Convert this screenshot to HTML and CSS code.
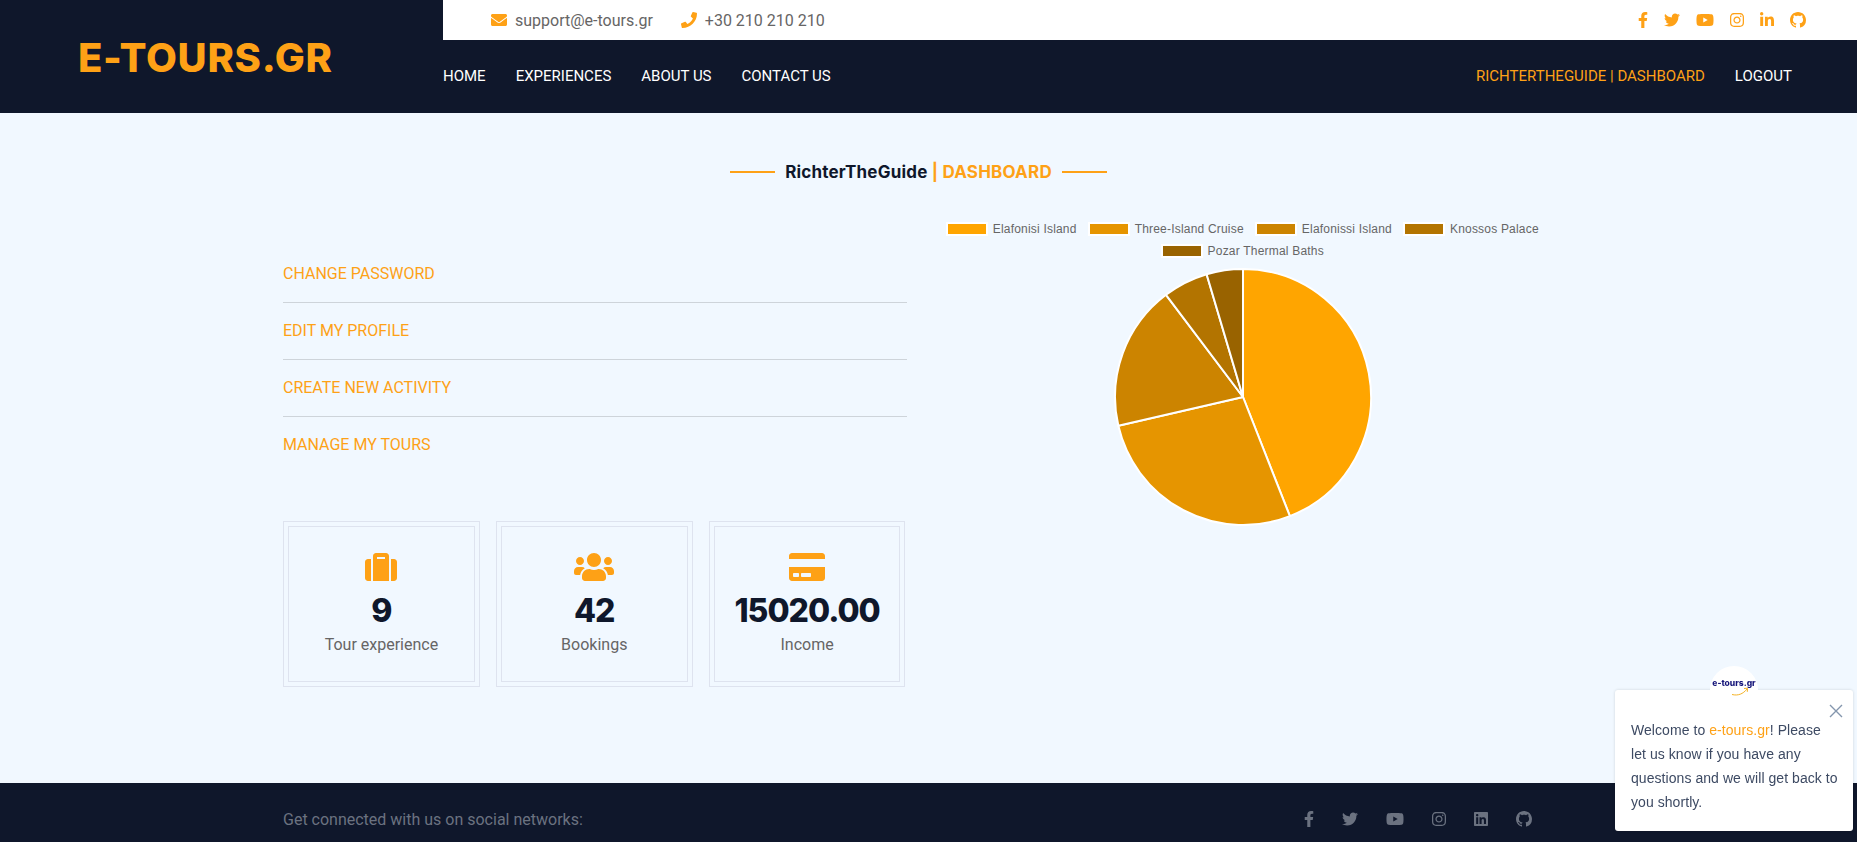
FILE: index.html
```html
<!DOCTYPE html>
<html lang="en">

<head>
    <meta charset="UTF-8">
    <meta name="viewport" content="width=device-width, initial-scale=1.0">
    <title>E-Tours.gr | Dashboard</title>
    <link rel="stylesheet" href="styles.css">
</head>

<body>
    <svg class="sprite" aria-hidden="true">
        <defs>
            <path id="i-envelope" d="M502.3 190.8c3.9-3.1 9.7-.2 9.7 4.7V400c0 26.5-21.5 48-48 48H48c-26.5 0-48-21.5-48-48V195.6c0-5 5.7-7.8 9.7-4.7 22.4 17.4 52.1 39.5 154.1 113.6 21.1 15.4 56.7 47.8 92.2 47.6 35.7.3 72-32.8 92.3-47.6 102-74.1 131.6-96.3 154-113.7zM256 320c23.2.4 56.6-29.2 73.4-41.4 132.7-96.3 142.8-104.7 173.4-128.7 5.8-4.5 9.2-11.5 9.2-18.9v-19c0-26.5-21.5-48-48-48H48C21.5 64 0 85.5 0 112v19c0 7.4 3.4 14.3 9.2 18.9 30.6 23.9 40.7 32.4 173.4 128.7 16.8 12.2 50.2 41.8 73.4 41.4z"/>
            <path id="i-phone" d="M493.4 24.6l-104-24c-11.3-2.6-22.9 3.3-27.5 13.9l-48 112c-4.2 9.8-1.4 21.3 6.9 28l60.6 49.6c-36 76.7-98.9 140.5-177.2 177.2l-49.6-60.6c-6.8-8.3-18.2-11.1-28-6.9l-112 48C3.9 366.5-2 378.1.6 389.4l24 104C27.1 504.2 36.7 512 48 512c256.1 0 464-207.5 464-464 0-11.2-7.7-20.9-18.6-23.4z"/>
            <path id="i-facebook" d="M279.14 288l14.22-92.66h-88.91v-60.13c0-25.35 12.42-50.06 52.24-50.06h40.42V6.26S260.43 0 225.36 0c-73.22 0-121.08 44.38-121.08 124.72v70.62H22.89V288h81.39v224h100.17V288z"/>
            <path id="i-twitter" d="M459.37 151.716c.325 4.548.325 9.097.325 13.645 0 138.72-105.583 298.558-298.558 298.558-59.452 0-114.68-17.219-161.137-47.106 8.447.974 16.568 1.299 25.34 1.299 49.055 0 94.213-16.568 130.274-44.832-46.132-.975-84.792-31.188-98.112-72.772 6.498.974 12.995 1.624 19.818 1.624 9.421 0 18.843-1.3 27.614-3.573-48.081-9.747-84.143-51.98-84.143-102.985v-1.299c13.969 7.797 30.214 12.67 47.431 13.319-28.264-18.843-46.781-51.005-46.781-87.391 0-19.492 5.197-37.36 14.294-52.954 51.655 63.675 129.3 105.258 216.365 109.807-1.624-7.797-2.599-15.918-2.599-24.04 0-57.828 46.782-104.934 104.934-104.934 30.213 0 57.502 12.67 76.67 33.137 23.715-4.548 46.456-13.32 66.599-25.34-7.798 24.366-24.366 44.833-46.132 57.827 21.117-2.273 41.584-8.122 60.426-16.243-14.292 20.791-32.161 39.308-52.628 54.253z"/>
            <path id="i-youtube" d="M549.655 124.083c-6.281-23.65-24.787-42.276-48.284-48.597C458.781 64 288 64 288 64S117.22 64 74.629 75.486c-23.497 6.322-42.003 24.947-48.284 48.597-11.412 42.867-11.412 132.305-11.412 132.305s0 89.438 11.412 132.305c6.281 23.65 24.787 41.5 48.284 47.821C117.22 448 288 448 288 448s170.78 0 213.371-11.486c23.497-6.321 42.003-24.171 48.284-47.821 11.412-42.867 11.412-132.305 11.412-132.305s0-89.438-11.412-132.305zm-317.51 213.508V175.185l142.739 81.205-142.739 81.201z"/>
            <path id="i-instagram" d="M224.1 141c-63.6 0-114.9 51.3-114.9 114.9s51.3 114.9 114.9 114.9S339 319.5 339 255.9 287.7 141 224.1 141zm0 189.6c-41.1 0-74.7-33.5-74.7-74.7s33.5-74.7 74.7-74.7 74.7 33.5 74.7 74.7-33.6 74.7-74.7 74.7zm146.4-194.3c0 14.9-12 26.8-26.8 26.8-14.9 0-26.8-12-26.8-26.8s12-26.8 26.8-26.8 26.8 12 26.8 26.8zm76.1 27.2c-1.7-35.9-9.9-67.7-36.2-93.9-26.2-26.2-58-34.4-93.9-36.2-37-2.1-147.9-2.1-184.9 0-35.8 1.7-67.6 9.9-93.9 36.1s-34.4 58-36.2 93.9c-2.1 37-2.1 147.9 0 184.9 1.7 35.9 9.9 67.7 36.2 93.9s58 34.4 93.9 36.2c37 2.1 147.9 2.1 184.9 0 35.9-1.7 67.7-9.9 93.9-36.2 26.2-26.2 34.4-58 36.2-93.9 2.1-37 2.1-147.8 0-184.8zM398.8 388c-7.8 19.6-22.9 34.7-42.6 42.6-29.5 11.7-99.5 9-132.1 9s-102.7 2.6-132.1-9c-19.6-7.8-34.7-22.9-42.6-42.6-11.7-29.5-9-99.5-9-132.1s-2.6-102.7 9-132.1c7.8-19.6 22.9-34.7 42.6-42.6 29.5-11.7 99.5-9 132.1-9s102.7-2.6 132.1 9c19.6 7.8 34.7 22.9 42.6 42.6 11.7 29.5 9 99.5 9 132.1s2.7 102.7-9 132.1z"/>
            <path id="i-linkedin-in" d="M100.28 448H7.4V148.9h92.88zM53.79 108.1C24.09 108.1 0 83.5 0 53.8a53.79 53.79 0 0 1 107.58 0c0 29.7-24.1 54.3-53.79 54.3zM447.9 448h-92.68V302.4c0-34.7-.7-79.2-48.29-79.2-48.29 0-55.69 37.7-55.69 76.7V448h-92.78V148.9h89.08v40.8h1.3c12.4-23.5 42.69-48.3 87.88-48.3 94 0 111.28 61.9 111.28 142.3V448z"/>
            <path id="i-linkedin" d="M416 32H31.9C14.3 32 0 46.5 0 64.3v383.4C0 465.5 14.3 480 31.9 480H416c17.6 0 32-14.5 32-32.3V64.3c0-17.8-14.4-32.3-32-32.3zM135.4 416H69V202.2h66.5V416zm-33.2-243c-21.3 0-38.5-17.3-38.5-38.5S80.9 96 102.2 96c21.2 0 38.5 17.3 38.5 38.5 0 21.3-17.2 38.5-38.5 38.5zm282.1 243h-66.4V312c0-24.8-.5-56.7-34.5-56.7-34.6 0-39.9 27-39.9 54.9V416h-66.4V202.2h63.7v29.2h.9c8.9-16.8 30.6-34.5 62.9-34.5 67.2 0 79.7 44.3 79.7 101.9V416z"/>
            <path id="i-github" d="M8 0C3.58 0 0 3.58 0 8c0 3.54 2.29 6.53 5.47 7.59.4.07.55-.17.55-.38 0-.19-.01-.82-.01-1.49-2.01.37-2.53-.49-2.69-.94-.09-.23-.48-.94-.82-1.13-.28-.15-.68-.52-.01-.53.63-.01 1.08.58 1.23.82.72 1.21 1.87.87 2.33.66.07-.52.28-.87.51-1.07-1.78-.2-3.64-.89-3.64-3.95 0-.87.31-1.59.82-2.15-.08-.2-.36-1.02.08-2.12 0 0 .67-.21 2.2.82.64-.18 1.32-.27 2-.27s1.36.09 2 .27c1.53-1.04 2.2-.82 2.2-.82.44 1.1.16 1.92.08 2.12.51.56.82 1.27.82 2.15 0 3.07-1.87 3.75-3.65 3.95.29.25.54.73.54 1.48 0 1.07-.01 1.93-.01 2.2 0 .21.15.46.55.38A8.013 8.013 0 0016 8c0-4.42-3.58-8-8-8z"/>
        </defs>
    </svg>

    <header class="site-header">
        <a class="brand" href="#">E-TOURS.GR</a>
        <div class="header-main">
            <div class="topbar">
                <div class="contact">
                    <span class="contact-item"><svg class="icon" viewBox="0 0 512 512"><use href="#i-envelope"/></svg>support@e-tours.gr</span>
                    <span class="contact-item"><svg class="icon" viewBox="0 0 512 512"><use href="#i-phone"/></svg>+30 210 210 210</span>
                </div>
                <div class="social">
                    <svg class="icon" viewBox="0 0 320 512"><use href="#i-facebook"/></svg>
                    <svg class="icon" viewBox="0 0 512 512"><use href="#i-twitter"/></svg>
                    <svg class="icon" viewBox="0 0 576 512"><use href="#i-youtube"/></svg>
                    <svg class="icon" viewBox="0 0 448 512"><use href="#i-instagram"/></svg>
                    <svg class="icon" viewBox="0 0 448 512"><use href="#i-linkedin-in"/></svg>
                    <svg class="icon" viewBox="0 0 16 16"><use href="#i-github"/></svg>
                </div>
            </div>
            <nav class="navbar">
                <div class="nav-group">
                    <a href="#">Home</a>
                    <a href="#">Experiences</a>
                    <a href="#">About us</a>
                    <a href="#">Contact us</a>
                </div>
                <div class="nav-group">
                    <a class="active" href="#">RichterTheGuide | Dashboard</a>
                    <a href="#">Logout</a>
                </div>
            </nav>
        </div>
    </header>

    <main class="page">
        <div class="content">
            <h1 class="page-title"><span class="title-line"></span><span>RichterTheGuide <em>| DASHBOARD</em></span><span class="title-line"></span></h1>

            <div class="dash-row">
                <section class="dash-left">
                    <ul class="menu">
                        <li><a href="#">Change password</a></li>
                        <li><a href="#">Edit my profile</a></li>
                        <li><a href="#">Create new activity</a></li>
                        <li><a href="#">Manage my tours</a></li>
                    </ul>

                    <div class="stats">
                        <div class="stat">
                            <div class="stat-inner">
                                <svg class="stat-icon" viewBox="0 0 512 512"><path d="M128 480h256V80c0-26.5-21.5-48-48-48H176c-26.5 0-48 21.5-48 48v400zm64-384h128v32H192V96zm320 80v256c0 26.5-21.5 48-48 48h-48V128h48c26.5 0 48 21.5 48 48zM96 480H48c-26.5 0-48-21.5-48-48V176c0-26.5 21.5-48 48-48h48v352z"/></svg>
                                <div class="stat-num">9</div>
                                <div class="stat-label">Tour experience</div>
                            </div>
                        </div>
                        <div class="stat">
                            <div class="stat-inner">
                                <svg class="stat-icon" viewBox="0 0 640 512"><path d="M96 224c35.3 0 64-28.7 64-64s-28.7-64-64-64-64 28.7-64 64 28.7 64 64 64zm448 0c35.3 0 64-28.7 64-64s-28.7-64-64-64-64 28.7-64 64 28.7 64 64 64zm32 32h-64c-17.6 0-33.5 7.1-45.1 18.6 40.3 22.1 68.9 62 75.1 109.4h66c17.7 0 32-14.3 32-32v-32c0-35.3-28.7-64-64-64zm-256 0c61.9 0 112-50.1 112-112S381.9 32 320 32 208 82.1 208 144s50.1 112 112 112zm76.8 32h-8.3c-20.8 10-43.9 16-68.5 16s-47.6-6-68.5-16h-8.3C179.6 288 128 339.6 128 403.2V432c0 26.5 21.5 48 48 48h288c26.5 0 48-21.5 48-48v-28.8c0-63.6-51.6-115.2-115.2-115.2zm-223.7-13.4C161.5 263.1 145.6 256 128 256H64c-35.3 0-64 28.7-64 64v32c0 17.7 14.3 32 32 32h65.9c6.3-47.4 34.9-87.3 75.2-109.4z"/></svg>
                                <div class="stat-num">42</div>
                                <div class="stat-label">Bookings</div>
                            </div>
                        </div>
                        <div class="stat">
                            <div class="stat-inner">
                                <svg class="stat-icon" viewBox="0 0 576 512"><path d="M0 432c0 26.5 21.5 48 48 48h480c26.5 0 48-21.5 48-48V256H0v176zm192-68c0-6.6 5.4-12 12-12h136c6.6 0 12 5.4 12 12v40c0 6.6-5.4 12-12 12H204c-6.6 0-12-5.4-12-12v-40zm-128 0c0-6.6 5.4-12 12-12h72c6.6 0 12 5.4 12 12v40c0 6.6-5.4 12-12 12H76c-6.6 0-12-5.4-12-12v-40zM576 80v48H0V80c0-26.5 21.5-48 48-48h480c26.5 0 48 21.5 48 48z"/></svg>
                                <div class="stat-num">15020.00</div>
                                <div class="stat-label">Income</div>
                            </div>
                        </div>
                    </div>
                </section>

                <section class="dash-chart">
                    <ul class="legend">
                        <li><span class="swatch swatch-1"></span>Elafonisi Island</li>
                        <li><span class="swatch swatch-2"></span>Three-Island Cruise</li>
                        <li><span class="swatch swatch-3"></span>Elafonissi Island</li>
                        <li><span class="swatch swatch-4"></span>Knossos Palace</li>
                        <li><span class="swatch swatch-5"></span>Pozar Thermal Baths</li>
                    </ul>
                    <svg class="pie" viewBox="-128 -128 256 256">
                        <g stroke="#fff" stroke-width="2" stroke-linejoin="round">
                            <path fill="#FFA500" d="M0 0V-127A127 127 0 0 1 46.5 118.2Z"/>
                            <path fill="#E69500" d="M0 0L46.5 118.2A127 127 0 0 1 -123.7 28.6Z"/>
                            <path fill="#CC8400" d="M0 0L-123.7 28.6A127 127 0 0 1 -76.4 -101.4Z"/>
                            <path fill="#B37400" d="M0 0L-76.4 -101.4A127 127 0 0 1 -36.1 -121.8Z"/>
                            <path fill="#996300" d="M0 0L-36.1 -121.8A127 127 0 0 1 0 -127Z"/>
                        </g>
                    </svg>
                </section>
            </div>
        </div>
    </main>

    <footer class="site-footer">
        <div class="footer-inner">
            <span>Get connected with us on social networks:</span>
            <div class="footer-social">
                <svg class="icon" viewBox="0 0 320 512"><use href="#i-facebook"/></svg>
                <svg class="icon" viewBox="0 0 512 512"><use href="#i-twitter"/></svg>
                <svg class="icon" viewBox="0 0 576 512"><use href="#i-youtube"/></svg>
                <svg class="icon" viewBox="0 0 448 512"><use href="#i-instagram"/></svg>
                <svg class="icon" viewBox="0 0 448 512"><use href="#i-linkedin"/></svg>
                <svg class="icon" viewBox="0 0 16 16"><use href="#i-github"/></svg>
            </div>
        </div>
    </footer>

    <aside class="chat">
        <div class="chat-avatar">
            <span>e-tours.gr</span>
            <svg class="chat-arc" viewBox="0 0 18 9"><path d="M1 7.5C7 9 12 7 16 2M13 1.5L16.5 1.2 16.3 4.8" fill="none" stroke="#f5b325" stroke-width="1"/></svg>
        </div>
        <div class="chat-box">
            <svg class="chat-close" viewBox="0 0 14 14"><path d="M1 1L13 13M13 1L1 13" fill="none" stroke="#8496ad" stroke-width="1.4"/></svg>
            <p>Welcome to <a href="#">e-tours.gr</a>! Please let us know if you have any questions and we will get back to you shortly.</p>
        </div>
    </aside>
</body>

</html>
```
FILE: styles.css
```css
* {
    box-sizing: border-box;
}

html, body {
    height: 100%;
}

body {
    margin: 0;
    display: flex;
    flex-direction: column;
    font-family: 'Roboto', sans-serif;
    font-size: 16px;
    color: #666565;
    background-color: #F1F8FF;
    overflow: hidden;
}

a {
    text-decoration: none;
    color: inherit;
}

ul {
    list-style: none;
    margin: 0;
    padding: 0;
}

.sprite {
    position: absolute;
    width: 0;
    height: 0;
}

.icon {
    height: 16px;
    width: auto;
    fill: currentColor;
    flex: none;
}

/* header */
.site-header {
    display: flex;
    height: 113px;
    background-color: #0F172B;
}

.brand {
    width: 443px;
    padding: 37px 0 0 78px;
    font-family: 'Inter', sans-serif;
    font-size: 40px;
    font-weight: 800;
    letter-spacing: 0.7px;
    line-height: 42px;
    color: #FEA116;
}

.header-main {
    flex: 1;
    display: flex;
    flex-direction: column;
}

.topbar {
    display: flex;
    justify-content: space-between;
    align-items: center;
    height: 40px;
    padding: 0 51px 0 48px;
    background-color: white;
}

.contact {
    display: flex;
    gap: 28px;
}

.contact-item {
    display: flex;
    align-items: center;
    gap: 8px;
}

.contact-item .icon, .social {
    color: #FEA116;
}

.social {
    display: flex;
    align-items: center;
    gap: 16px;
}

.navbar {
    flex: 1;
    display: flex;
    justify-content: space-between;
    align-items: center;
    padding: 0 65px 1px 0;
}

.nav-group {
    display: flex;
    gap: 30px;
}

.nav-group a {
    font-size: 15px;
    font-weight: 400;
    text-transform: uppercase;
    color: white;
}

.nav-group a.active {
    color: #FEA116;
}

/* main */
.page {
    flex: 1;
    padding: 47px 20px 0 0;
}

.content {
    width: 1271px;
    margin: 0 auto;
}

.page-title {
    display: flex;
    justify-content: center;
    align-items: center;
    gap: 10px;
    margin: 0 0 34px;
    font-family: 'Inter', sans-serif;
    font-size: 17px;
    font-weight: 700;
    letter-spacing: 0.2px;
    line-height: 24px;
    color: #0F172B;
}

.page-title em {
    font-style: normal;
    color: #FEA116;
}

.title-line {
    width: 45px;
    height: 2px;
    background-color: #FEA116;
}

.dash-row {
    display: grid;
    grid-template-columns: 1fr 1fr;
    gap: 24px;
}

.dash-left {
    padding-top: 28px;
}

.menu li {
    padding: 16px 0;
    line-height: 24px;
    border-bottom: 1px solid #ced4da;
}

.menu li:last-child {
    border-bottom: none;
}

.menu a {
    text-transform: uppercase;
    color: #FEA116;
}

.stats {
    display: grid;
    grid-template-columns: repeat(3, 1fr);
    gap: 16px;
    margin: 48px 1px 0 0;
}

.stat {
    height: 166px;
    padding: 4px;
    border: 1px solid #dee3ef;
}

.stat-inner {
    height: 100%;
    display: flex;
    flex-direction: column;
    align-items: center;
    padding-top: 24px;
    border: 1px solid #dee3ef;
}

.stat-icon {
    height: 32px;
    width: auto;
    fill: #FEA116;
}

.stat-num {
    margin-top: 8px;
    font-family: 'Inter', sans-serif;
    font-size: 32px;
    font-weight: 800;
    letter-spacing: -1px;
    line-height: 40px;
    color: #0F172B;
}

.stat-label {
    margin-top: 2px;
    line-height: 24px;
}

/* chart */
.dash-chart {
    display: flex;
    flex-direction: column;
    align-items: center;
}

.legend {
    display: flex;
    flex-wrap: wrap;
    justify-content: center;
    column-gap: 11px;
    font-family: 'Liberation Sans', Arial, sans-serif;
    font-size: 12px;
    letter-spacing: 0.2px;
    color: #666;
}

.legend li {
    display: flex;
    align-items: center;
    gap: 5px;
    height: 22px;
}

.swatch {
    width: 42px;
    height: 14px;
    border: 2px solid white;
}

.swatch-1 { background-color: #FFA500; }
.swatch-2 { background-color: #E69500; }
.swatch-3 { background-color: #CC8400; }
.swatch-4 { background-color: #B37400; }
.swatch-5 { background-color: #996300; }

.pie {
    width: 258px;
    height: 258px;
    margin: 6px 0 0 2px;
}

/* footer */
.site-footer {
    height: 59px;
    background-color: #0F172B;
    color: #6b7280;
}

.footer-inner {
    display: flex;
    justify-content: space-between;
    align-items: center;
    width: 1271px;
    height: 100%;
    margin-left: 283px;
    padding: 13px 22px 0 0;
}

.footer-social {
    display: flex;
    align-items: center;
    gap: 28px;
}

/* chat popup */
.chat {
    position: fixed;
    left: 1615px;
    top: 666px;
    width: 238px;
}

.chat-avatar {
    position: absolute;
    z-index: 1;
    left: 95px;
    top: 0;
    width: 48px;
    height: 48px;
    border-radius: 50%;
    background-color: white;
    text-align: center;
    font-family: 'Inter', sans-serif;
    font-size: 8.5px;
    font-weight: 800;
    line-height: 34px;
    color: #16167a;
}

.chat-arc {
    position: absolute;
    left: 21px;
    top: 21px;
    width: 18px;
    height: 9px;
}

.chat-box {
    position: relative;
    margin-top: 24px;
    padding: 28px 15px 17px 16px;
    background-color: white;
    border-radius: 3px;
    box-shadow: 0 0 3px rgba(0, 0, 0, 0.15);
    font-family: 'Liberation Sans', Arial, sans-serif;
    font-size: 14px;
    letter-spacing: 0.06px;
    line-height: 24px;
    color: #3d4a63;
}

.chat-box p {
    margin: 0;
}

.chat-box a {
    color: #FEA116;
}

.chat-close {
    position: absolute;
    right: 10px;
    top: 14px;
    width: 14px;
    height: 14px;
}
```
